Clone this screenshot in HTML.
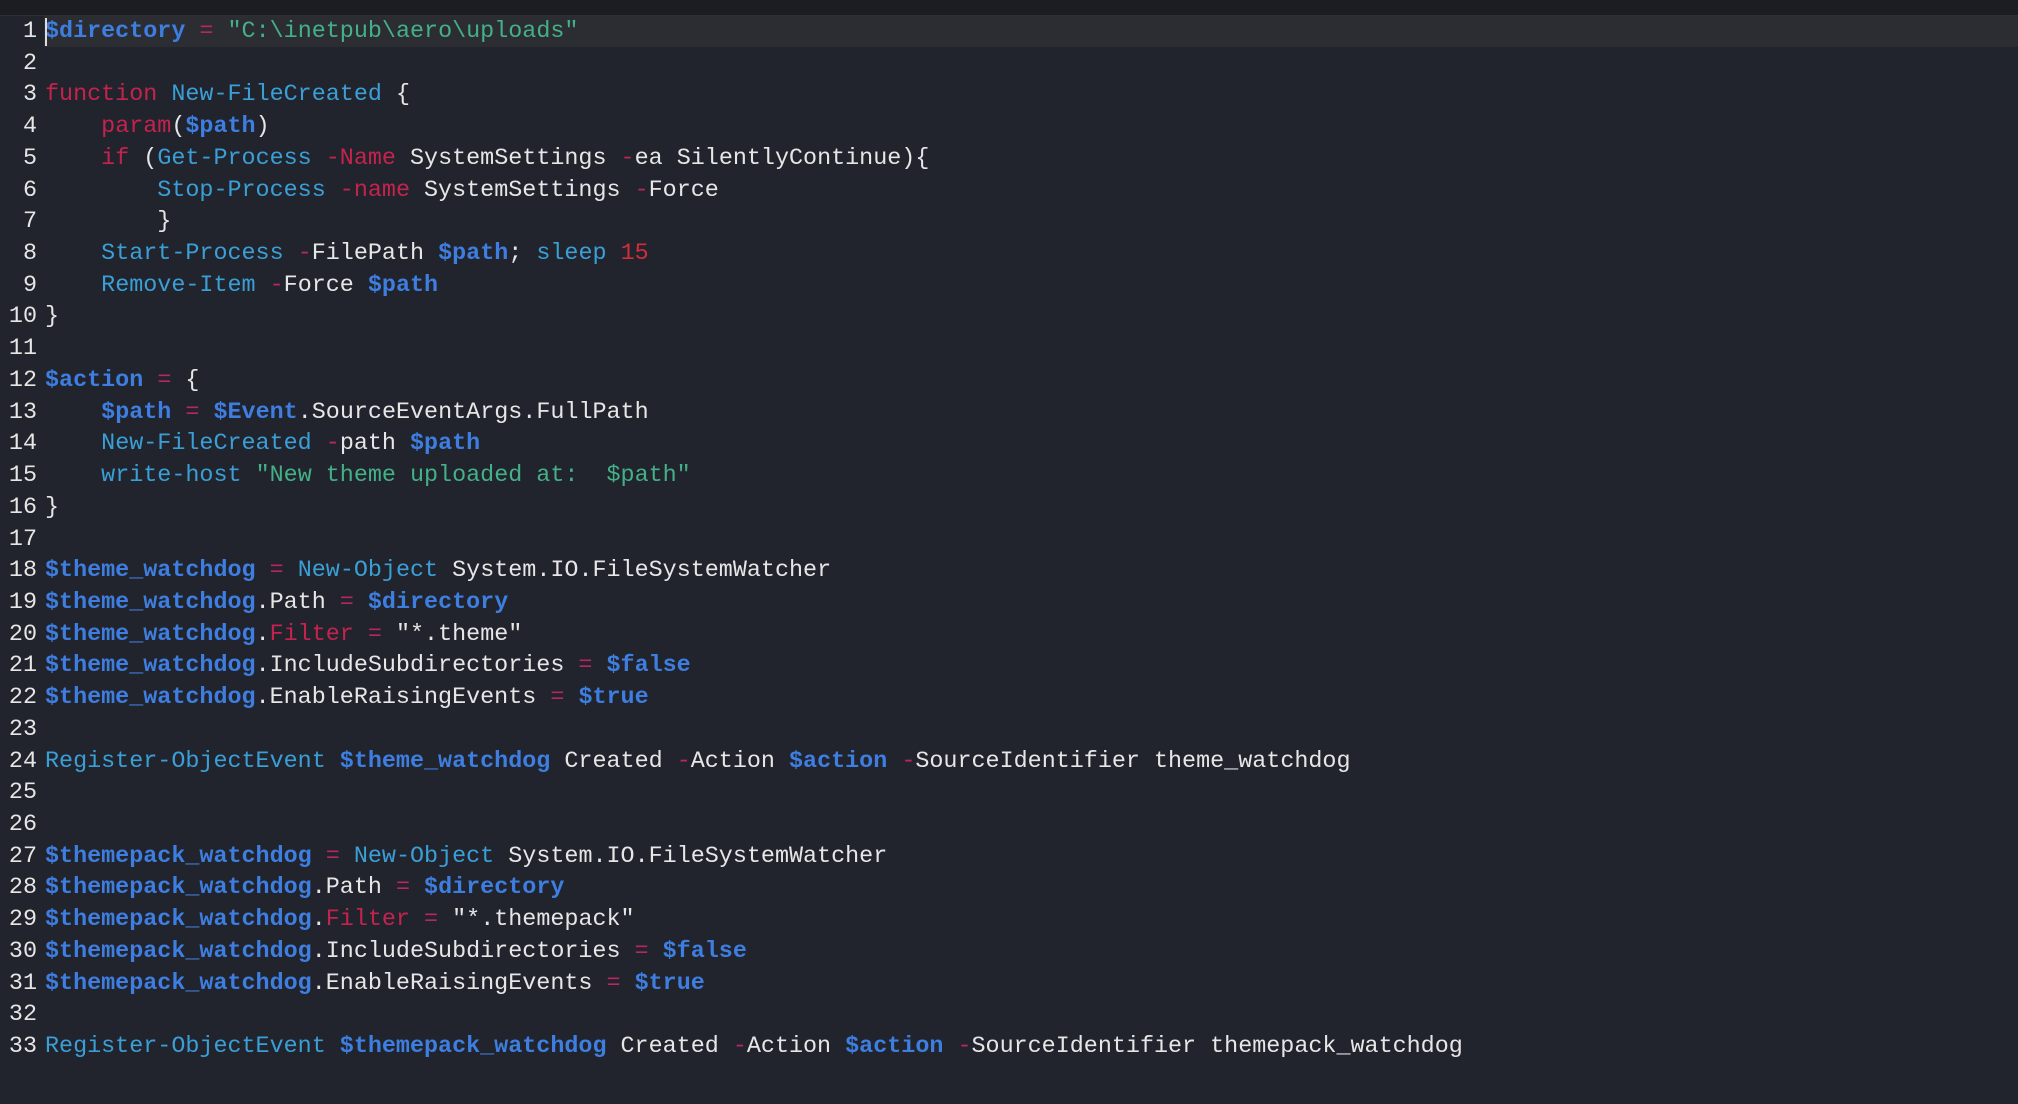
<!DOCTYPE html>
<html><head><meta charset="utf-8"><style>
html,body{margin:0;padding:0;width:2018px;height:1104px;overflow:hidden;background:#21242d;}
.top{position:absolute;left:0;top:0;width:2018px;height:15px;background:#1b1d22;border-bottom:1px solid #2e3038;}
.hl{position:absolute;left:44px;top:16px;width:1974px;height:31px;background:#2b2d32;}
.cur{position:absolute;left:45px;top:18px;width:2px;height:28px;background:#ddd;}
.code{position:absolute;left:0;top:17px;font-family:"Liberation Mono",monospace;font-size:23.4px;line-height:31.72px;color:#e6e6e6;white-space:pre;}
.ln{display:inline-block;width:37px;text-align:right;margin-right:8px;color:#e6e6e6;}
.v{color:#3d7ee0;font-weight:bold;}
.c{color:#3a9fd6;}
.k{color:#c4234e;}
.s{color:#44b087;}
.n{color:#d42c3a;}
.o{color:#b8285a;}
</style></head><body>
<div class="top"></div>
<div class="hl"></div>
<div class="code"><div><span class="ln">1</span><span class="v">$directory</span> <span class="o">=</span> <span class="s">"C:\inetpub\aero\uploads"</span></div><div><span class="ln">2</span></div><div><span class="ln">3</span><span class="k">function</span> <span class="c">New-FileCreated</span> {</div><div><span class="ln">4</span>    <span class="k">param</span>(<span class="v">$path</span>)</div><div><span class="ln">5</span>    <span class="k">if</span> (<span class="c">Get-Process</span> <span class="k">-Name</span> SystemSettings <span class="o">-</span>ea SilentlyContinue){</div><div><span class="ln">6</span>        <span class="c">Stop-Process</span> <span class="k">-name</span> SystemSettings <span class="o">-</span>Force</div><div><span class="ln">7</span>        }</div><div><span class="ln">8</span>    <span class="c">Start-Process</span> <span class="o">-</span>FilePath <span class="v">$path</span>; <span class="c">sleep</span> <span class="n">15</span></div><div><span class="ln">9</span>    <span class="c">Remove-Item</span> <span class="o">-</span>Force <span class="v">$path</span></div><div><span class="ln">10</span>}</div><div><span class="ln">11</span></div><div><span class="ln">12</span><span class="v">$action</span> <span class="o">=</span> {</div><div><span class="ln">13</span>    <span class="v">$path</span> <span class="o">=</span> <span class="v">$Event</span>.SourceEventArgs.FullPath</div><div><span class="ln">14</span>    <span class="c">New-FileCreated</span> <span class="o">-</span>path <span class="v">$path</span></div><div><span class="ln">15</span>    <span class="c">write-host</span> <span class="s">"New theme uploaded at:  $path"</span></div><div><span class="ln">16</span>}</div><div><span class="ln">17</span></div><div><span class="ln">18</span><span class="v">$theme_watchdog</span> <span class="o">=</span> <span class="c">New-Object</span> System.IO.FileSystemWatcher</div><div><span class="ln">19</span><span class="v">$theme_watchdog</span>.Path <span class="o">=</span> <span class="v">$directory</span></div><div><span class="ln">20</span><span class="v">$theme_watchdog</span>.<span class="k">Filter</span> <span class="o">=</span> "*.theme"</div><div><span class="ln">21</span><span class="v">$theme_watchdog</span>.IncludeSubdirectories <span class="o">=</span> <span class="v">$false</span></div><div><span class="ln">22</span><span class="v">$theme_watchdog</span>.EnableRaisingEvents <span class="o">=</span> <span class="v">$true</span></div><div><span class="ln">23</span></div><div><span class="ln">24</span><span class="c">Register-ObjectEvent</span> <span class="v">$theme_watchdog</span> Created <span class="o">-</span>Action <span class="v">$action</span> <span class="o">-</span>SourceIdentifier theme_watchdog</div><div><span class="ln">25</span></div><div><span class="ln">26</span></div><div><span class="ln">27</span><span class="v">$themepack_watchdog</span> <span class="o">=</span> <span class="c">New-Object</span> System.IO.FileSystemWatcher</div><div><span class="ln">28</span><span class="v">$themepack_watchdog</span>.Path <span class="o">=</span> <span class="v">$directory</span></div><div><span class="ln">29</span><span class="v">$themepack_watchdog</span>.<span class="k">Filter</span> <span class="o">=</span> "*.themepack"</div><div><span class="ln">30</span><span class="v">$themepack_watchdog</span>.IncludeSubdirectories <span class="o">=</span> <span class="v">$false</span></div><div><span class="ln">31</span><span class="v">$themepack_watchdog</span>.EnableRaisingEvents <span class="o">=</span> <span class="v">$true</span></div><div><span class="ln">32</span></div><div><span class="ln">33</span><span class="c">Register-ObjectEvent</span> <span class="v">$themepack_watchdog</span> Created <span class="o">-</span>Action <span class="v">$action</span> <span class="o">-</span>SourceIdentifier themepack_watchdog</div></div>
<div class="cur"></div>
</body></html>
